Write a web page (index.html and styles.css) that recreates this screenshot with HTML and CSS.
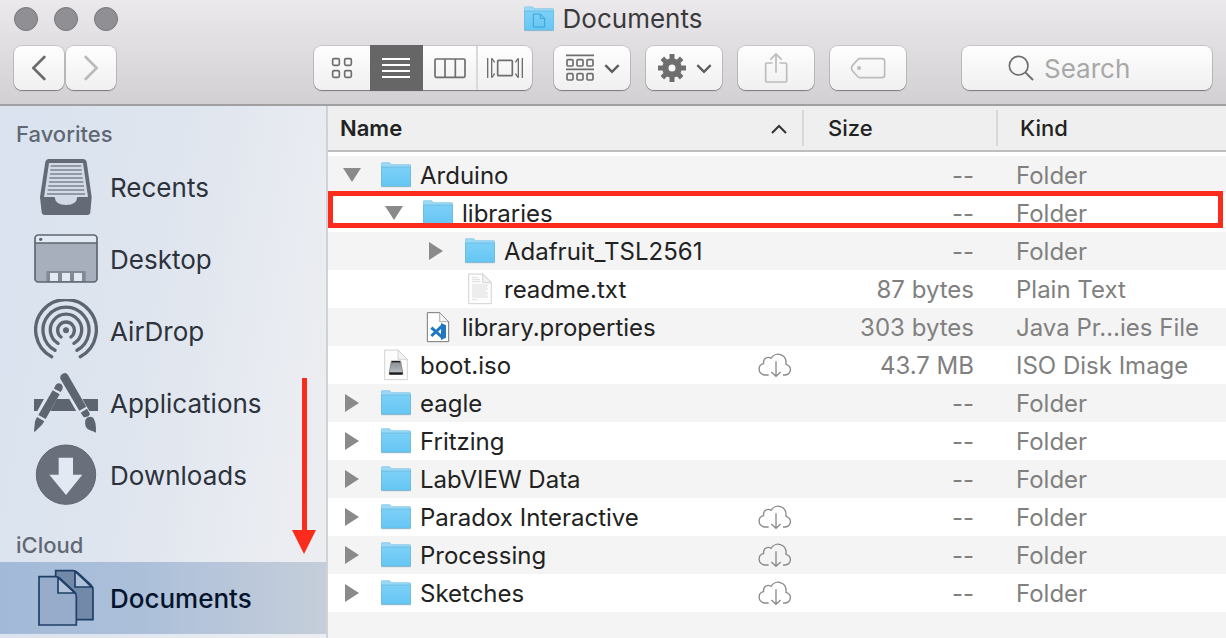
FILE: index.html
```
<!DOCTYPE html>
<html lang="en">
<head>
<meta charset="utf-8">
<meta name="viewport" content="width=device-width, initial-scale=1">
<title>Documents</title>
<link rel="stylesheet" href="styles.css">
</head>
<body>
<svg class="sprite" aria-hidden="true">
  <defs>
    <linearGradient id="folder-front" x1="0" y1="0" x2="0" y2="1">
      <stop offset="0" stop-color="#7dd0f7"/><stop offset="1" stop-color="#65c6f3"/>
    </linearGradient>
    <linearGradient id="disk-body" x1="0" y1="0" x2="0" y2="1">
      <stop offset="0" stop-color="#7d8489"/><stop offset="1" stop-color="#c3c7c9"/>
    </linearGradient>
  </defs>
  <symbol id="folder" viewBox="0 0 90 76">
    <path d="M1 4Q1 1 4 1H24Q27 1 29 4L31 7H86Q89 7 89 10V70H1Z" fill="#9bd9f6" stroke="#74bfe2" stroke-width="2"/>
    <path d="M1 14H89V70Q89 72 86 72H4Q1 72 1 70Z" fill="url(#folder-front)" stroke="#62b5dc" stroke-width="2"/>
    <path d="M1 73H89" stroke="#8fb6c8" stroke-width="3"/>
  </symbol>
  <symbol id="cloud" viewBox="93 36 102 76">
    <path d="M125 104H112C92 100 91 74 110 70C107 52 124 48 132 54C144 34 180 38 177 72C196 78 194 102 174 104H168" fill="none" stroke="#8a8a8a" stroke-width="4"/>
    <path d="M147 63V107M133 95L147 108L161 95" fill="none" stroke="#8a8a8a" stroke-width="4"/>
  </symbol>
  <symbol id="chevron" viewBox="914 190 48 32">
    <path d="M918 196L938 216L958 196" fill="none" stroke="#5c5c5c" stroke-width="7"/>
  </symbol>
  <symbol id="open" viewBox="0 0 18 14"><path d="M0 0H18L9 14Z" fill="#8a8a8a"/></symbol>
  <symbol id="closed" viewBox="0 0 14 18"><path d="M0 0V18L14 9Z" fill="#8a8a8a"/></symbol>
</svg>

<div class="window">
  <header class="toolbar">
    <div class="titlebar">
      <div class="lights">
        <button class="light" aria-label="Close"></button>
        <button class="light" aria-label="Minimize"></button>
        <button class="light" aria-label="Zoom"></button>
      </div>
      <h1 class="title">
        <svg width="30" height="26" viewBox="0 0 90 76" aria-hidden="true"><use href="#folder"/><path d="M28 23H49L62 36V62H28ZM49 23V36H62" fill="none" stroke="#38a3d8" stroke-width="3"/></svg>
        Documents
      </h1>
    </div>
    <div class="tools">
      <div class="nav">
        <button class="btn nav-btn" aria-label="Back"><svg width="14" height="26" viewBox="96 165 42 78"><path d="M133 171L100 204L133 237" fill="none" stroke="#6c6c6c" stroke-width="8" stroke-linecap="round"/></svg></button>
        <button class="btn nav-btn" aria-label="Forward"><svg width="14" height="26" viewBox="252 165 42 78"><path d="M257 171L290 204L257 237" fill="none" stroke="#bababa" stroke-width="8" stroke-linecap="round"/></svg></button>
      </div>
      <div class="space-wide"></div>
      <div class="actions">
        <div class="btn views">
          <button class="view view-first" aria-label="Icons"><svg width="22" height="22" viewBox="93 171 66 66" fill="none" stroke="#6e6e6e" stroke-width="5"><rect x="98" y="176" width="20" height="20" rx="4"/><rect x="134" y="176" width="20" height="20" rx="4"/><rect x="98" y="212" width="20" height="20" rx="4"/><rect x="134" y="212" width="20" height="20" rx="4"/></svg></button>
          <button class="view view-on" aria-label="List"><svg width="28" height="22" viewBox="246 171 84 66"><path d="M246 177H330M246 195H330M246 213H330M246 231H330" stroke="#fff" stroke-width="6"/></svg></button>
          <button class="view" aria-label="Columns"><svg width="32" height="22" viewBox="402 171 96 66" fill="none" stroke="#6e6e6e" stroke-width="5"><rect x="405" y="177" width="90" height="55" rx="3"/><path d="M435 177V232M466 177V232"/></svg></button>
          <button class="view view-line" aria-label="Cover Flow"><svg width="36" height="22" viewBox="558 171 108 66" fill="none" stroke="#6e6e6e" stroke-width="5"><rect x="590" y="181" width="44" height="46" rx="3"/><path d="M560 174V234M664 174V234" stroke-width="4"/><path d="M572 175V233M652 175V233" stroke-width="4"/><path d="M573 176L581 187M573 232L581 221M651 176L643 187M651 232L643 221" stroke-width="4"/></svg></button>
        </div>
        <button class="btn tool menu" aria-label="Arrange"><svg width="28" height="28" viewBox="798 166 84 84" fill="none" stroke="#6e6e6e" stroke-width="5"><path d="M798 170H882M798 212H882"/><rect x="801" y="183" width="18" height="19" rx="3"/><rect x="831" y="183" width="18" height="19" rx="3"/><rect x="861" y="183" width="18" height="19" rx="3"/><rect x="801" y="225" width="18" height="19" rx="3"/><rect x="831" y="225" width="18" height="19" rx="3"/><rect x="861" y="225" width="18" height="19" rx="3"/></svg><svg width="16" height="11" aria-hidden="true"><use href="#chevron"/></svg></button>
        <button class="btn tool menu" aria-label="Actions"><svg width="28" height="28" viewBox="-42 -42 84 84" fill="none" stroke="#6e6e6e"><circle r="20" stroke-width="19"/><path d="M0-27V-42M0 27V42M-27 0H-42M27 0H42M-19-19L-29-29M19 19L29 29M-19 19L-29 29M19-19L29-29" stroke-width="15"/></svg><svg width="16" height="11" aria-hidden="true"><use href="#chevron"/></svg></button>
        <button class="btn tool" aria-label="Share"><svg width="24" height="32" viewBox="132 154 72 96" fill="none" stroke="#bcbcbc" stroke-width="5"><path d="M158 187H139Q137 187 137 190V241Q137 244 140 244H197Q200 244 200 241V190Q200 187 197 187H178M168 159V216M151 177L168 160L185 177"/></svg></button>
        <button class="btn tool" aria-label="Tags"><svg width="36" height="22" viewBox="390 171 108 66"><path d="M418 176H486Q494 176 494 184V225Q494 233 486 233H418Q414 232 398 213Q391 204 398 196Q414 177 418 176Z" fill="none" stroke="#bcbcbc" stroke-width="5"/><circle cx="417" cy="204" r="6" fill="#bcbcbc"/></svg></button>
      </div>
      <div class="space-narrow"></div>
      <label class="btn search">
        <svg width="26" height="26" viewBox="865 169 78 78" fill="none" stroke="#6e6e6e" stroke-width="5"><circle cx="897" cy="201" r="28"/><path d="M917 221L940 244" stroke-width="6"/></svg>
        <input class="search-input" type="search" placeholder="Search" aria-label="Search">
      </label>
    </div>
  </header>

  <div class="content">
    <nav class="sidebar">
      <h2 class="group">Favorites</h2>
      <a class="place" href="#recents"><svg class="place-icon" width="64" height="64" viewBox="102 462 192 192"><path d="M136 482Q138 474 146 474H250Q258 474 260 482L275 588L271 634Q270 642 262 642H134Q126 642 125 634L120 588Z" fill="#646b77"/><path d="M147 486H249L264 588H232Q230 612 198 612Q166 612 164 588H132Z" fill="#d2dae7"/><path d="M152 495H244M151 507H245M150 519H246M148 531H248M147 543H250M145 555H252M143 567H253M141 579H255" stroke="#7d8490" stroke-width="5"/></svg>Recents</a>
      <a class="place" href="#desktop"><svg class="place-icon" width="64" height="64" viewBox="102 18 192 192"><rect x="105" y="42" width="186" height="141" rx="10" fill="#a8afbc"/><path d="M105 66V51Q105 42 114 42H282Q291 42 291 51V66Z" fill="#e3e9f2"/><path d="M139 183V153Q139 150 142 150H254Q257 150 257 153V183Z" fill="#828a96"/><path d="M150 156H174V180H150ZM186 156H210V180H186ZM222 156H246V180H222Z" fill="#e3e9f2"/><rect x="105" y="42" width="186" height="141" rx="10" fill="none" stroke="#5d6571" stroke-width="5"/><path d="M105 66H291" stroke="#5d6571" stroke-width="5"/><circle cx="122" cy="55" r="5" fill="#5d6571"/></svg>Desktop</a>
      <a class="place" href="#airdrop"><svg class="place-icon" width="64" height="64" viewBox="-96 -94 192 192" fill="none" stroke="#5d6571" stroke-width="10" stroke-linecap="round"><path d="M-43 79A91 91 0 1 1 43 79M-33 60A69 69 0 1 1 33 60M-24 39A47 47 0 1 1 24 39M-15 20A25 25 0 1 1 15 20"/><circle r="9" fill="#5d6571" stroke="none"/></svg>AirDrop</a>
      <a class="place" href="#applications"><svg class="place-icon" width="64" height="64" viewBox="102 453 192 192"><path d="M102 537H294V573H102Z" fill="#5d6571"/><path d="M195 480L256 587M174 496L122 590" stroke="#dfe5ef" stroke-width="34"/><path d="M181 476Q179 466 188 461Q198 456 204 465L259 560L238 572Z" fill="#5d6571"/><path d="M242 578L261 566L269 580Q271 585 265 589L258 591Q252 593 249 589Z" fill="#5d6571"/><path d="M256 600Q264 586 278 592Q289 602 288 638Q278 634 270 631Q252 624 256 600Z" fill="#5d6571"/><path d="M164 501Q170 486 182 491Q191 497 187 508L182 516L162 506Z" fill="#5d6571"/><path d="M158 511L179 523L137 597L115 585Z" fill="#5d6571"/><path d="M111 591L133 604L126 614L104 636L102 632L105 604Z" fill="#5d6571"/></svg>Applications</a>
      <a class="place" href="#downloads"><svg class="place-icon" width="64" height="64" viewBox="102 36 192 192"><circle cx="198" cy="131" r="89" fill="#69707c" stroke="#5d6571" stroke-width="3"/><path d="M176 80H219V131H247L198 192L148 131H176Z" fill="#e3e9f2"/></svg>Downloads</a>
      <h2 class="group group-next">iCloud</h2>
      <a class="place place-on" href="#documents"><svg class="place-icon" width="64" height="64" viewBox="102 408 192 192" stroke="#1f3f66" stroke-width="5"><path d="M167 422H218Q226 422 232 427L272 464Q279 470 279 480V569H167Z" fill="#7389aa"/><path d="M225 426V471H275Q270 466 232 430Z" fill="#b0c3db"/><path d="M117 440H166Q174 440 180 445L222 484Q229 490 229 500V585H117Z" fill="#96acca"/><path d="M174 444V489H225Q220 484 180 448Z" fill="#b0c3db"/></svg>Documents</a>
      <svg class="arrow" width="24" height="176" viewBox="0 0 24 176" aria-hidden="true"><path d="M10 0H15V152H24L12 176L0 152H10Z" fill="#fb2c1c"/></svg>
    </nav>

    <main class="files">
      <table class="list">
        <colgroup><col><col class="col-size"><col class="col-kind"></colgroup>
        <thead>
          <tr>
            <th scope="col" class="sorted"><div class="head head-name">Name<svg width="16" height="11" viewBox="0 0 16 11" aria-hidden="true"><path d="M1 10L8 3L15 10" fill="none" stroke="#333" stroke-width="2"/></svg></div></th>
            <th scope="col"><div class="head">Size</div></th>
            <th scope="col"><div class="head head-kind">Kind</div></th>
          </tr>
        </thead>
        <tbody>
          <tr><td><div class="name"><button class="toggle" aria-label="Collapse Arduino"><svg width="18" height="14"><use href="#open"/></svg></button><svg class="icon" width="30" height="26"><use href="#folder"/></svg>Arduino</div></td><td class="size">--</td><td class="kind">Folder</td></tr>
          <tr><td><div class="name level-1"><button class="toggle" aria-label="Collapse libraries"><svg width="18" height="14"><use href="#open"/></svg></button><svg class="icon" width="30" height="26"><use href="#folder"/></svg>libraries</div></td><td class="size">--</td><td class="kind">Folder</td></tr>
          <tr><td><div class="name level-2"><button class="toggle" aria-label="Expand Adafruit_TSL2561"><svg width="14" height="18"><use href="#closed"/></svg></button><svg class="icon" width="30" height="26"><use href="#folder"/></svg>Adafruit_TSL2561</div></td><td class="size">--</td><td class="kind">Folder</td></tr>
          <tr><td><div class="name level-2"><span class="toggle"></span><svg class="icon" width="30" height="32" viewBox="417 8 90 96"><path d="M428 11H470L496 37V100H428Z" fill="#fdfdfd" stroke="#bdbdbd" stroke-width="2"/><path d="M470 11V37H496Z" fill="#f2f2f2" stroke="#c4c4c4" stroke-width="2"/><path d="M438 22H456M438 28H462M438 34H464M438 44H486M438 50H483M438 56H486M438 62H480M438 68H486M438 74H484M438 80H486M438 88H454" stroke="#cfcfcf" stroke-width="2"/></svg>readme.txt</div></td><td class="size">87 bytes</td><td class="kind">Plain Text</td></tr>
          <tr><td><div class="name level-1"><span class="toggle"></span><svg class="icon" width="30" height="32" viewBox="291 122 90 96"><path d="M304 127H341L368 154V214H304Z" fill="#fff" stroke="#777" stroke-width="3"/><path d="M341 127V154H368Z" fill="#f4f4f4" stroke="#888" stroke-width="2"/><path d="M316 172L350 202M316 197L350 165" stroke="#1f78c0" stroke-width="9"/><path d="M345 158L360 165V202L345 209Z" fill="#1f78c0"/></svg>library.properties</div></td><td class="size">303 bytes</td><td class="kind">Java Pr…ies File</td></tr>
          <tr><td><div class="name"><span class="toggle"></span><svg class="icon" width="30" height="32" viewBox="165 236 90 96"><path d="M176 239H216L244 267V328H176Z" fill="#fdfdfd" stroke="#bdbdbd" stroke-width="2"/><path d="M216 239V267H244Z" fill="#f2f2f2" stroke="#c4c4c4" stroke-width="2"/><path d="M196 272H224L230 305V312H190V305Z" fill="url(#disk-body)" stroke="#777" stroke-width="2"/><path d="M197 274H222" stroke="#222" stroke-width="4"/><circle cx="210" cy="289" r="9" fill="none" stroke="#a9afb2" stroke-width="2"/><path d="M190 306H230V313H190Z" fill="#1c1c1c"/></svg>boot.iso<svg class="cloud" width="34" height="26"><use href="#cloud"/></svg></div></td><td class="size">43.7 MB</td><td class="kind">ISO Disk Image</td></tr>
          <tr><td><div class="name"><button class="toggle" aria-label="Expand eagle"><svg width="14" height="18"><use href="#closed"/></svg></button><svg class="icon" width="30" height="26"><use href="#folder"/></svg>eagle</div></td><td class="size">--</td><td class="kind">Folder</td></tr>
          <tr><td><div class="name"><button class="toggle" aria-label="Expand Fritzing"><svg width="14" height="18"><use href="#closed"/></svg></button><svg class="icon" width="30" height="26"><use href="#folder"/></svg>Fritzing</div></td><td class="size">--</td><td class="kind">Folder</td></tr>
          <tr><td><div class="name"><button class="toggle" aria-label="Expand LabVIEW Data"><svg width="14" height="18"><use href="#closed"/></svg></button><svg class="icon" width="30" height="26"><use href="#folder"/></svg>LabVIEW Data</div></td><td class="size">--</td><td class="kind">Folder</td></tr>
          <tr><td><div class="name"><button class="toggle" aria-label="Expand Paradox Interactive"><svg width="14" height="18"><use href="#closed"/></svg></button><svg class="icon" width="30" height="26"><use href="#folder"/></svg>Paradox Interactive<svg class="cloud" width="34" height="26"><use href="#cloud"/></svg></div></td><td class="size">--</td><td class="kind">Folder</td></tr>
          <tr><td><div class="name"><button class="toggle" aria-label="Expand Processing"><svg width="14" height="18"><use href="#closed"/></svg></button><svg class="icon" width="30" height="26"><use href="#folder"/></svg>Processing<svg class="cloud" width="34" height="26"><use href="#cloud"/></svg></div></td><td class="size">--</td><td class="kind">Folder</td></tr>
          <tr><td><div class="name"><button class="toggle" aria-label="Expand Sketches"><svg width="14" height="18"><use href="#closed"/></svg></button><svg class="icon" width="30" height="26"><use href="#folder"/></svg>Sketches<svg class="cloud" width="34" height="26"><use href="#cloud"/></svg></div></td><td class="size">--</td><td class="kind">Folder</td></tr>
        </tbody>
      </table>
      <div class="rest"></div>
      <div class="marker"></div>
    </main>
  </div>
</div>
</body>
</html>
```
FILE: styles.css
```
* { box-sizing: border-box; }

body {
  margin: 0;
  font-family: Inter, "Noto Sans", sans-serif;
  font-size: 24px;
  color: #222;
  background: #fff;
}

button {
  margin: 0;
  padding: 0;
  border: 0;
  background: none;
  font: inherit;
}

svg { flex: none; display: block; }

.sprite { position: absolute; width: 0; height: 0; }

.window {
  display: flex;
  flex-direction: column;
  height: 100vh;
  overflow: hidden;
}

/* Toolbar */
.toolbar {
  flex: none;
  padding-bottom: 14px;
  border-bottom: 2px solid #a09fa2;
  background: linear-gradient(#ebe9ec, #d2d0d3);
}

.titlebar {
  display: grid;
  grid-template-columns: 1fr auto 1fr;
  align-items: center;
  height: 38px;
  padding: 0 14px;
}

.lights { display: flex; gap: 16px; }

.light {
  width: 24px;
  height: 24px;
  border: 1px solid #77767a;
  border-radius: 50%;
  background: #908f94;
}

.title {
  display: flex;
  align-items: center;
  gap: 9px;
  margin: 0;
  font-size: 26px;
  font-weight: 400;
  line-height: 32px;
  color: #3a3a3c;
}

.tools {
  display: flex;
  padding: 8px 14px 0;
}

.btn {
  height: 44px;
  border-radius: 8px;
  background: linear-gradient(#fefefe, #f0f0f0);
  box-shadow: 0 0 0 1px rgba(0, 0, 0, 0.12), 0 1px 1px rgba(0, 0, 0, 0.35);
}

.nav { display: flex; gap: 2px; }

.nav-btn {
  display: flex;
  align-items: center;
  justify-content: center;
  width: 50px;
}

.space-wide { flex: 7; }
.space-narrow { flex: 2; }

.actions { display: flex; gap: 16px; }

.views {
  display: flex;
  width: 218px;
  margin-right: 6px;
}

.view {
  display: flex;
  flex: 1;
  align-items: center;
  justify-content: center;
}

.view-first { flex: none; width: 56px; }
.view-on { background: #666; box-shadow: 0 1px #666, 0 -1px #666; }
.view-line { border-left: 2px solid #dadada; }

.tool {
  display: flex;
  align-items: center;
  justify-content: center;
  gap: 10px;
  width: 76px;
}

.menu { padding-left: 2px; }

.search {
  display: flex;
  align-items: center;
  gap: 10px;
  width: 250px;
  padding-left: 46px;
}

.search-input {
  flex: 1;
  min-width: 0;
  padding: 0;
  border: 0;
  outline: 0;
  background: none;
  font: inherit;
  font-size: 26px;
  color: #333;
}

.search-input::placeholder { color: #a8a8a8; opacity: 1; }

/* Sidebar */
.content {
  display: flex;
  flex: 1;
  min-height: 0;
}

.sidebar {
  position: relative;
  flex: none;
  width: 328px;
  border-right: 2px solid #d0d2d7;
  background: linear-gradient(100deg, #dae3ef 10%, #dfe5ee 45%, #e8ebf1 75%, #edeef1);
}

.group {
  margin: 0;
  padding: 11px 16px 0;
  font-size: 22px;
  font-weight: 500;
  line-height: 34px;
  color: #606873;
}

.group-next { padding-top: 17px; }

.place {
  display: flex;
  align-items: center;
  gap: 12px;
  height: 72px;
  padding-left: 34px;
  font-size: 26px;
  color: #2c333c;
  text-decoration: none;
}

.place-on {
  font-weight: 500;
  color: #04142c;
  background: linear-gradient(90deg, #a2bad8, #adc0da 45%, #c5ceda);
}

.arrow {
  position: absolute;
  top: 272px;
  right: 10px;
}

/* File list */
.files {
  position: relative;
  display: flex;
  flex: 1;
  flex-direction: column;
  min-width: 0;
}

.list {
  width: 100%;
  border-collapse: separate;
  border-spacing: 0;
  table-layout: fixed;
  white-space: nowrap;
}

.col-size { width: 194px; }
.col-kind { width: 228px; }

th {
  height: 46px;
  padding: 0;
  border-bottom: 2px solid #bdbdbd;
  background: #efefef;
  text-align: left;
  font-size: 22px;
  font-weight: 500;
}

.sorted { font-weight: 600; }

.head {
  display: flex;
  align-items: center;
  justify-content: space-between;
  height: 36px;
  padding-left: 24px;
  border-right: 2px solid #d6d6d6;
}

.head-name { padding: 0 15px 0 12px; }
.head-kind { border: 0; padding-left: 22px; }

tbody::before {
  content: "";
  display: block;
  height: 4px;
}

td { height: 38px; padding: 0; }

tbody tr:nth-child(odd) { background: #f4f4f4; }

.name {
  display: flex;
  align-items: center;
  height: 38px;
  padding: 0 12px 0 14px;
}

.level-1 { padding-left: 56px; }
.level-2 { padding-left: 98px; }

.toggle {
  display: flex;
  justify-content: center;
  width: 20px;
}

.icon { margin: 0 9px 0 19px; }
.cloud { margin-left: auto; }

.size {
  padding-right: 24px;
  text-align: right;
  color: #808080;
}

.kind { padding-left: 18px; color: #808080; }

.rest { flex: 1; background: #f4f4f4; }

.marker {
  position: absolute;
  top: 85px;
  left: 0;
  right: 3px;
  height: 37px;
  border: 5px solid #fb2c1c;
}
```
